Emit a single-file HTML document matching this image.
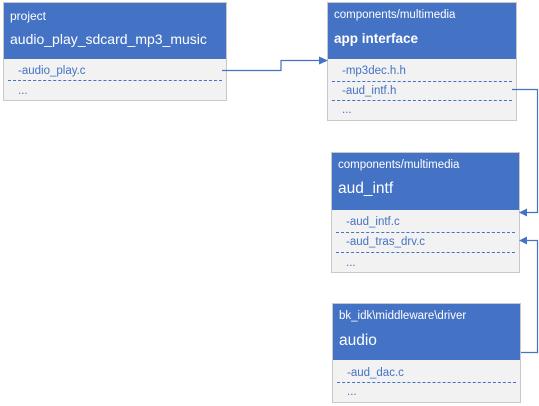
<!DOCTYPE html><html><head><style>
body{margin:0;width:539px;height:406px;background:#fff;position:relative;font-family:"Liberation Sans",sans-serif;overflow:hidden}
.b{position:absolute;border:1px solid #c8c8c8;background:#f2f2f2;box-sizing:border-box}
.h{position:absolute;left:0;right:0;top:0;background:#4472c4;color:#fff}
.s{position:absolute;left:6px;font-size:12px;white-space:nowrap}
.t{position:absolute;left:6px;font-size:15.5px;white-space:nowrap}
.r{position:absolute;left:14px;font-size:11.5px;color:#4472c4;white-space:nowrap}
.d{position:absolute;left:4px;right:4px;border-top:1px dashed #4472c4}
</style></head><body>
<div class="b" style="left:3px;top:2px;width:224px;height:99px">
<div class="h" style="height:56px"><div class="s" style="top:6px">project</div><div class="t" style="top:28px;font-size:14px">audio_play_sdcard_mp3_music</div></div>
<div class="r" style="top:62px">-audio_play.c</div><div class="d" style="top:77px"></div><div class="r" style="top:82px">...</div>
</div>
<div class="b" style="left:327px;top:2px;width:190px;height:119px">
<div class="h" style="height:56px"><div class="s" style="top:6px;font-size:11.5px">components/multimedia</div><div class="t" style="top:28px;font-weight:bold;font-size:13.5px">app interface</div></div>
<div class="r" style="top:62px">-mp3dec.h.h</div><div class="d" style="top:78px"></div><div class="r" style="top:82px">-aud_intf.h</div><div class="d" style="top:97px"></div><div class="r" style="top:101px">...</div>
</div>
<div class="b" style="left:331px;top:152px;width:189px;height:121px">
<div class="h" style="height:57px"><div class="s" style="top:6px;font-size:11.5px">components/multimedia</div><div class="t" style="top:27px">aud_intf</div></div>
<div class="r" style="top:63px">-aud_intf.c</div><div class="d" style="top:79px"></div><div class="r" style="top:83px">-aud_tras_drv.c</div><div class="d" style="top:99px"></div><div class="r" style="top:104px">...</div>
</div>
<div class="b" style="left:332px;top:303px;width:189px;height:100px">
<div class="h" style="height:56px"><div class="s" style="top:6px;font-size:11.5px">bk_idk\middleware\driver</div><div class="t" style="top:28px">audio</div></div>
<div class="r" style="top:63px">-aud_dac.c</div><div class="d" style="top:78px"></div><div class="r" style="top:82px">...</div>
</div>
<svg width="539" height="406" style="position:absolute;left:0;top:0">
<g fill="none" stroke="#4472c4" stroke-width="1.2">
<path d="M222 70.5H281V60.5H320"/>
<path d="M512 89.5H537.5V212.5H526"/>
<path d="M521 352.5H537.5V240.5H526"/>
</g>
<g fill="#4472c4">
<path d="M328 60.5L319 56.5V64.5Z"/>
<path d="M519 212.5L527 208.5V216.5Z"/>
<path d="M519 240.5L527 236.5V244.5Z"/>
</g>
</svg>
</body></html>
